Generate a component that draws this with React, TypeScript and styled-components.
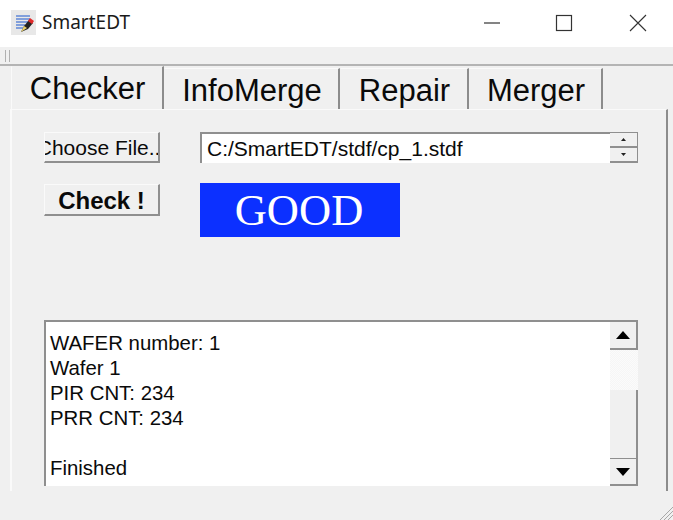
import React from "react";
import styled, { createGlobalStyle } from "styled-components";

const Global = createGlobalStyle`
  html, body { margin: 0; padding: 0; background: #f0f0f0; overflow: hidden; }
  #root { width: 673px; height: 520px; }
  * { box-sizing: border-box; }
`;

const Win = styled.div`
  width: 673px; height: 520px; display: flex; flex-direction: column;
  background: #f0f0f0; font-family: "Liberation Sans", Arial, sans-serif; color: #0a0a0a;
  position: relative; overflow: hidden;
`;
const TitleBar = styled.div`
  height: 47px; background: #fff; display: flex; align-items: center; padding-left: 11px; flex: none;
`;
const AppIcon = styled.svg`width: 25px; height: 25px; flex: none; margin-top: -2px;`;
const Title = styled.div`
  font-family: "Noto Sans", "Open Sans", sans-serif; font-size: 19px; margin-left: 6px; color: #1a1a1a; flex: 1;
  padding-bottom: 3px;
`;
const WinBtns = styled.div`display: flex; margin-right: -3px; padding-bottom: 2px;`;
const WinBtn = styled.div<{ $w: number }>`
  width: ${p => p.$w}px; height: 45px; display: flex; align-items: center; justify-content: center;
  svg { width: 18px; height: 18px; }
`;
const Strip = styled.div`
  height: 19px; flex: none; border-bottom: 2px solid #b4b4b4; padding: 3px 0 0 5px;
`;
const Grip = styled.div`
  width: 5px; height: 12px; border-left: 1px solid #b0b0b0; border-right: 1px solid #b0b0b0;
`;
const TabBar = styled.div`
  display: flex; height: 43px; padding-left: 11px; flex: none; align-items: flex-end;
`;
const Tab = styled.div<{ $w: number; $active?: boolean }>`
  width: ${p => p.$w}px; height: ${p => (p.$active ? 43 : 41)}px;
  border-top: 1px solid ${p => (p.$active ? "#f0f0f0" : "#fafafa")};
  border-left: 1px solid ${p => (p.$active ? "#fafafa" : "transparent")};
  border-right: 2px solid #8c8c8c;
  display: flex; align-items: center; justify-content: center;
  font-size: 31px; padding-top: ${p => (p.$active ? 1 : 3)}px; line-height: 1;
  padding-left: 1px;
`;
const Pane = styled.div`
  width: 658px; height: 382px; margin-left: 10px; flex: none;
  border-top: 1px solid #fafafa; border-left: 2px solid #fafafa; border-right: 2px solid #8c8c8c;
  padding: 22px 28px 0 32px; display: flex; flex-direction: column;
`;
const Row = styled.div<{ $h: number; $mt?: number }>`
  display: flex; height: ${p => p.$h}px; margin-top: ${p => p.$mt ?? 0}px; flex: none; align-items: flex-start;
`;
const Button = styled.div<{ $bold?: boolean; $h?: number }>`
  width: 116px; height: ${p => p.$h ?? 31}px; flex: none;
  border-top: 1px solid #fafafa; border-left: 1px solid #fafafa;
  border-right: 2px solid #8f8f8f; border-bottom: 2px solid #8f8f8f;
  display: flex; align-items: center; justify-content: center; overflow: hidden; white-space: nowrap;
  font-size: ${p => (p.$bold ? 24 : 21)}px; font-weight: ${p => (p.$bold ? 700 : 400)};
  background: #f0f0f0;
  padding-top: 2px;
`;
const Spin = styled.div`
  width: 438px; height: 31px; margin-left: 40px; background: #fff; display: flex; flex: none;
  border-top: 2px solid #8f8f8f; border-left: 2px solid #8f8f8f;
`;
const PathText = styled.div`
  flex: 1; font-size: 21px; line-height: 29px; padding-left: 5px; white-space: nowrap;
`;
const SpinBtns = styled.div`width: 28px; display: flex; flex-direction: column; flex: none; margin-top: -1px;`;
const SpinBtn = styled.div`
  flex: 1; background: #f0f0f0; border-right: 1px solid #8f8f8f; border-bottom: 2px solid #8f8f8f;
  display: flex; align-items: center; justify-content: center;
  svg { width: 5px; height: 3px; }
`;
const Good = styled.div`
  width: 200px; height: 54px; margin-left: 40px; background: #0c30ff; color: #fff; flex: none;
  font-family: "Liberation Serif", serif; font-size: 44.5px; line-height: 54px; text-align: center; padding-right: 2px;
  margin-top: -1px;
`;
const Log = styled.div`
  width: 594px; height: 166px; margin-top: 82px; flex: none; display: flex; background: #fff;
  border-top: 2px solid #8f8f8f; border-left: 2px solid #8f8f8f;
`;
const LogText = styled.div`
  flex: 1; padding: 9px 0 0 4px; font-size: 20.4px; line-height: 25px; white-space: pre;
`;
const Scroll = styled.div`width: 28px; flex: none; display: flex; flex-direction: column; background: #f0f0f0;`;
const ScrollBtn = styled.div<{ $down?: boolean }>`
  height: 28px; flex: none; display: flex; align-items: center; justify-content: center; background: #f0f0f0;
  border-right: 2px solid #8f8f8f; border-bottom: 2px solid #8f8f8f;
  border-top: ${p => (p.$down ? "1px solid #8f8f8f" : "none")};
  svg { width: 14px; height: 8px; }
`;
const Track = styled.div`
  height: 40px; flex: none;
  background: repeating-conic-gradient(#f6f6f6 0% 25%, #fbfbfb 0% 50%) 0 0 / 2px 2px;
`;
const Thumb = styled.div`
  flex: 1; border-right: 2px solid #8f8f8f; background: #f0f0f0;
`;
const Corner = styled.svg`
  position: absolute; right: 0; bottom: 0; width: 13px; height: 13px;
`;

export default function App() {
  return (
    <Win>
      <Global />
      <TitleBar>
        <AppIcon viewBox="0 0 25 25">
          <rect width="25" height="25" fill="#e8e8e8" />
          <g stroke="#5f86d6" strokeWidth="1.6">
            <path d="M5 6h14M5 9h14M5 12h12M5 15h9M5 18h7" />
          </g>
          <path d="M10 22l3-6 5-6 4 3-5 6z" fill="#222" />
          <path d="M17 11l2-3 4 3-2 3z" fill="#e12a2a" />
          <path d="M10 22l3-6 3 2z" fill="#e8cf6a" />
        </AppIcon>
        <Title>SmartEDT</Title>
        <WinBtns>
          <WinBtn $w={72}>
            <svg viewBox="0 0 18 18"><path d="M1 9h16" stroke="#333" strokeWidth="1.2" /></svg>
          </WinBtn>
          <WinBtn $w={72}>
            <svg viewBox="0 0 18 18"><rect x="1.5" y="1.5" width="15" height="15" fill="none" stroke="#333" strokeWidth="1.2" /></svg>
          </WinBtn>
          <WinBtn $w={76}>
            <svg viewBox="0 0 18 18"><path d="M1 1l16 16M17 1L1 17" stroke="#333" strokeWidth="1.1" /></svg>
          </WinBtn>
        </WinBtns>
      </TitleBar>
      <Strip><Grip /></Strip>
      <TabBar>
        <Tab $w={153} $active>Checker</Tab>
        <Tab $w={176}>InfoMerge</Tab>
        <Tab $w={129}>Repair</Tab>
        <Tab $w={134}>Merger</Tab>
      </TabBar>
      <Pane>
        <Row $h={31}>
          <Button>Choose File...</Button>
          <Spin>
            <PathText>C:/SmartEDT/stdf/cp_1.stdf</PathText>
            <SpinBtns>
              <SpinBtn><svg viewBox="0 0 5 3"><path d="M2.5 0L5 3H0z" fill="#222" /></svg></SpinBtn>
              <SpinBtn><svg viewBox="0 0 5 3"><path d="M0 0h5L2.5 3z" fill="#222" /></svg></SpinBtn>
            </SpinBtns>
          </Spin>
        </Row>
        <Row $h={54} $mt={21}>
          <Button $bold $h={32}>Check !</Button>
          <Good>GOOD</Good>
        </Row>
        <Log>
          <LogText>{"WAFER number: 1\nWafer 1\nPIR CNT: 234\nPRR CNT: 234\n\nFinished"}</LogText>
          <Scroll>
            <ScrollBtn><svg viewBox="0 0 14 8"><path d="M7 0l7 8H0z" fill="#000" /></svg></ScrollBtn>
            <Track />
            <Thumb />
            <ScrollBtn $down><svg viewBox="0 0 14 8"><path d="M0 0h14L7 8z" fill="#000" /></svg></ScrollBtn>
          </Scroll>
        </Log>
      </Pane>
      <Corner viewBox="0 0 13 13">
        <path d="M0 13L13 0M4 13L13 4M8 13l5-5" stroke="#a8a8a8" strokeWidth="1" />
      </Corner>
    </Win>
  );
}
